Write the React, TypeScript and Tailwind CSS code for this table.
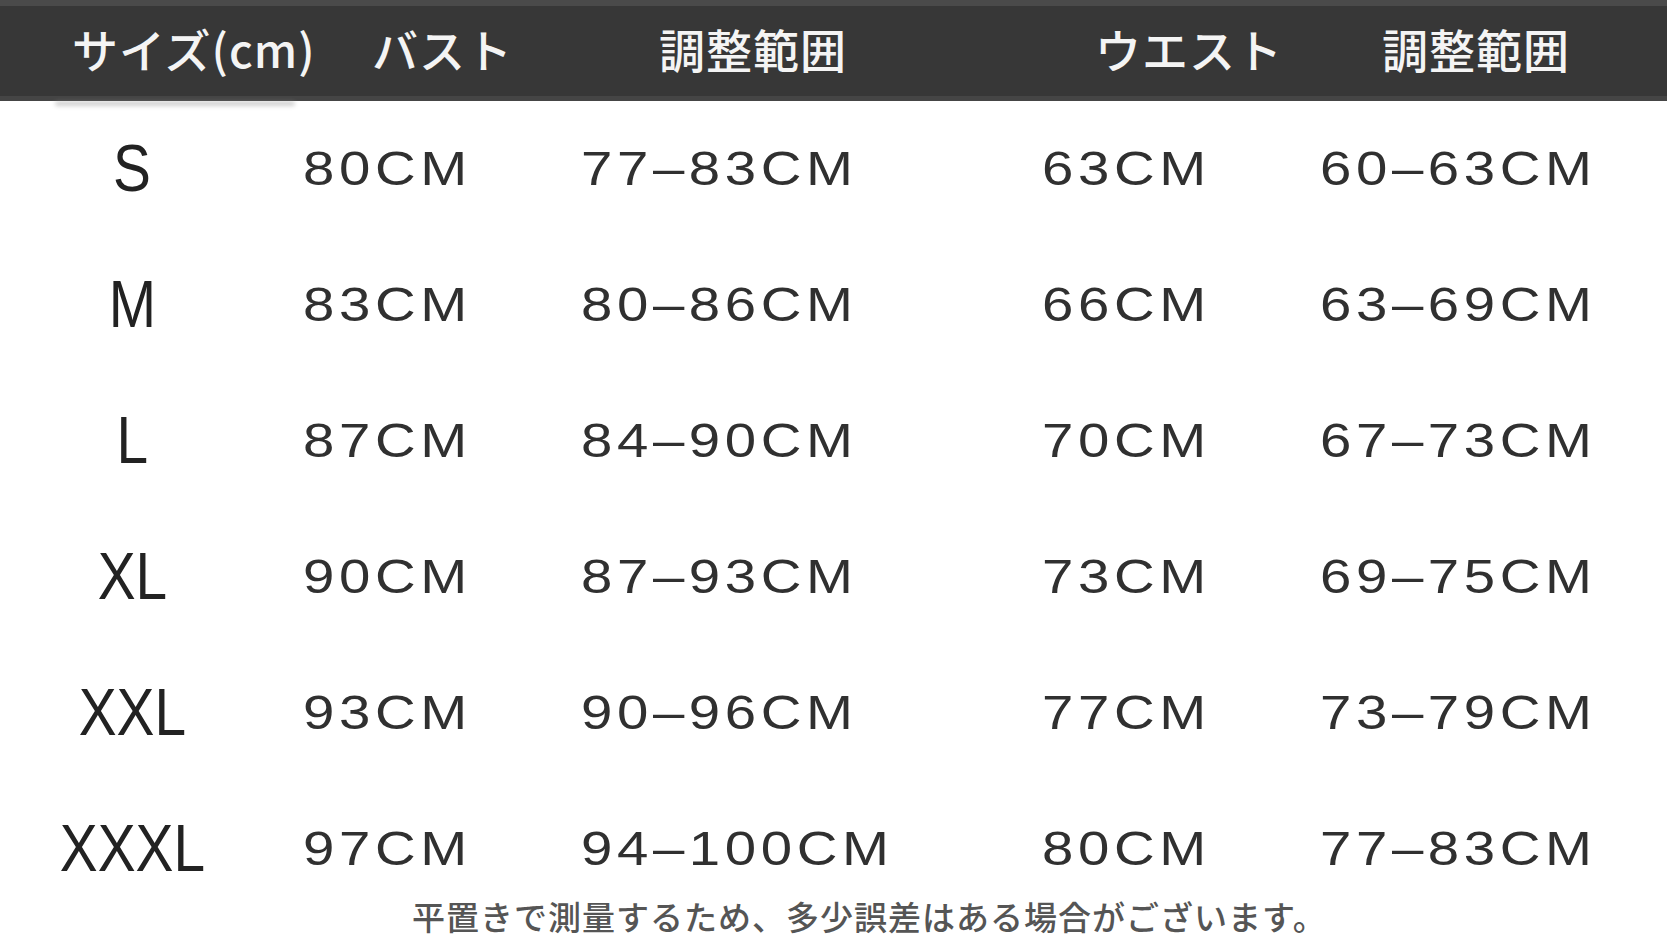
const rows = [
  ["S", "80CM", "77–83CM", "63CM", "60–63CM"],
  ["M", "83CM", "80–86CM", "66CM", "63–69CM"],
  ["L", "87CM", "84–90CM", "70CM", "67–73CM"],
  ["XL", "90CM", "87–93CM", "73CM", "69–75CM"],
  ["XXL", "93CM", "90–96CM", "77CM", "73–79CM"],
  ["XXXL", "97CM", "94–100CM", "80CM", "77–83CM"],
];

const jp = { fontFamily: '"Noto Sans CJK JP", "Noto Sans", sans-serif' };
const latin = { fontFamily: '"Liberation Sans", Arial, sans-serif' };

function Value({ text }: { text: string }) {
  return (
    <span className="inline-block origin-left scale-x-[1.15] text-[49px] leading-none tracking-[4px] text-[#303030]" style={latin}>
      {text}
    </span>
  );
}

export default function App() {
  return (
    <div className="h-[940px] w-[1667px] overflow-hidden bg-white">
      {/* header bar */}
      <div className="border-t-[6px] border-b-[5px] border-t-[#4a4a4a] border-b-[#454545] bg-[#373737]">
        <div className="flex h-[90px] items-center pb-[6px] pl-[72px] text-[46px] font-medium leading-none tracking-[1px] text-[#f4f4f4]" style={jp}>
          <div className="w-[300px]">サイズ(cm)</div>
          <div className="w-[287px]">バスト</div>
          <div className="w-[436px]">調整範囲</div>
          <div className="w-[287px]">ウエスト</div>
          <div>調整範囲</div>
        </div>
      </div>
      <div className="h-0">
        <div className="ml-[55px] h-[5px] w-[240px] rounded-full bg-[#8a8a8a] opacity-40 blur-[2px]" />
      </div>

      <div className="-mt-[1px] flex flex-col">
        {rows.map(([size, bust, bustRange, waist, waistRange]) => (
          <div key={size} className="grid h-[136px] grid-cols-[265px_316px_461px_278px_1fr] items-center">
            <div className="flex justify-center">
              <span className="inline-block scale-x-[0.86] text-[66px] leading-none text-[#222222]" style={latin}>
                {size}
              </span>
            </div>
            <div className="pl-[38px]">
              <Value text={bust} />
            </div>
            <div>
              <Value text={bustRange} />
            </div>
            <div>
              <Value text={waist} />
            </div>
            <div>
              <Value text={waistRange} />
            </div>
          </div>
        ))}
      </div>

      <div className="-mt-[22px] flex h-[44px] items-center pl-[412px] text-[33px] font-medium leading-none tracking-[1px] text-[#555555]" style={jp}>
        平置きで測量するため、多少誤差はある場合がございます。
      </div>
    </div>
  );
}
